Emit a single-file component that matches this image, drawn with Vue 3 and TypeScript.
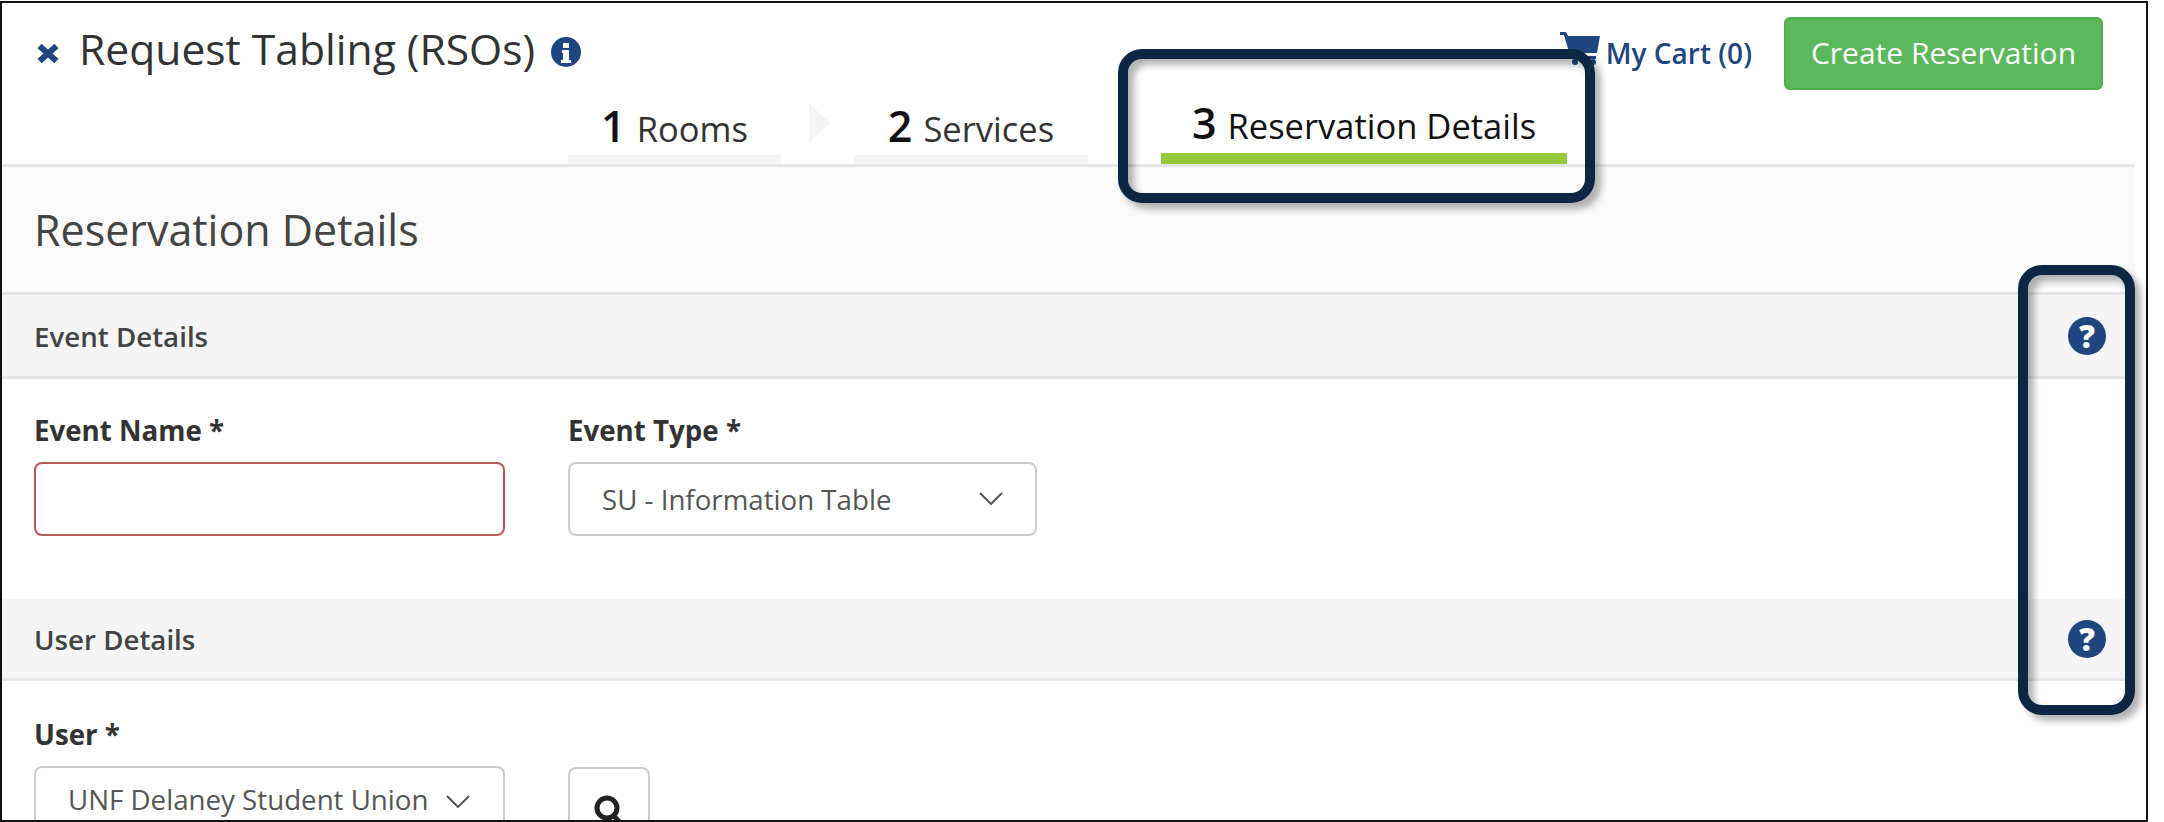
<script setup lang="ts">
const steps = [
  { n: '1', label: 'Rooms', active: false },
  { n: '2', label: 'Services', active: false },
  { n: '3', label: 'Reservation Details', active: true },
]
</script>

<template>
  <div class="page">
    <div class="frame">
      <header class="head">
        <div class="top">
          <svg class="close" viewBox="0 0 24 21"><path d="M3.5 3 L20.5 18 M20.5 3 L3.5 18" /></svg>
          <h1 class="title">Request Tabling (RSOs)</h1>
          <svg class="info" viewBox="0 0 30 30">
            <circle cx="15" cy="15" r="15" fill="#1f467f" />
            <path d="M12 6h6v5h-6zM11 13h7v10h2v3H10v-3h2v-7h-1z" fill="#fff" />
          </svg>
          <div class="spacer"></div>
          <a class="cart">
            <svg class="cart-ico" viewBox="0 0 40 34">
              <path d="M0 1h6l2 4h32l-3 17H13l1 3h22v3H11L4 4H0z" fill="#1f467f" />
              <circle cx="15" cy="31" r="3" fill="#1f467f" />
              <circle cx="33" cy="31" r="3" fill="#1f467f" />
            </svg>
            <span>My Cart (0)</span>
          </a>
          <button class="create">Create Reservation</button>
        </div>
        <nav class="steps">
          <template v-for="(s, i) in steps" :key="s.n">
            <div v-if="i > 0" class="sep"><i v-if="i === 1" class="arrow"></i></div>
            <div class="step" :class="['step-' + s.n, { active: s.active }]">
              <b class="num">{{ s.n }}</b>
              <span class="lbl">{{ s.label }}</span>
            </div>
          </template>
        </nav>
      </header>

      <div class="page-title"><h2>Reservation Details</h2></div>

      <div class="band">
        <span>Event Details</span>
        <span class="help">?</span>
      </div>
      <div class="form-row first">
        <div class="field">
          <label>Event Name *</label>
          <div class="control error"></div>
        </div>
        <div class="field type-field">
          <label>Event Type *</label>
          <div class="control select">
            <span>SU - Information Table</span>
            <svg class="chev" viewBox="0 0 24 13"><path d="M1 1 L12 12 L23 1" /></svg>
          </div>
        </div>
      </div>

      <div class="band">
        <span>User Details</span>
        <span class="help">?</span>
      </div>
      <div class="form-row last">
        <div class="field">
          <label>User *</label>
          <div class="control select user">
            <span>UNF Delaney Student Union</span>
            <svg class="chev" viewBox="0 0 24 13"><path d="M1 1 L12 12 L23 1" /></svg>
          </div>
        </div>
        <div class="field search-field">
          <button class="search">
            <svg viewBox="0 0 30 32"><circle cx="13" cy="13" r="10" /><path d="M20 21 L28 30" /></svg>
          </button>
        </div>
      </div>
    </div>

    <div class="callout callout-tab"></div>
    <div class="callout callout-help"></div>
  </div>
</template>

<style>
html, body { margin: 0; background: #fff; }
</style>

<style scoped>
.page {
  position: relative;
  width: 2164px;
  height: 822px;
  overflow: hidden;
  background: #fff;
  font-family: "Open Sans", "Liberation Sans", sans-serif;
  color: #333;
}
.frame {
  box-sizing: border-box;
  width: 2148px;
  height: 821px;
  margin-top: 1px;
  padding-right: 11px;
  border: 2px solid #111;
  overflow: hidden;
}
.head {
  box-sizing: border-box;
  height: 161px;
  display: flex;
  flex-direction: column;
}
.top {
  display: flex;
  align-items: flex-start;
  height: 87px;
  flex: none;
  padding: 14px 32px 0 34px;
  box-sizing: border-box;
}
.close { width: 24px; height: 21px; margin-top: 26px; flex: none; }
.close path { stroke: #1f467f; stroke-width: 6; fill: none; }
.title {
  margin: 6px 0 0 19px;
  font-size: 42.6px;
  font-weight: 400;
  line-height: 50px;
  color: #333;
}
.info { width: 30px; height: 30px; margin: 20px 0 0 16px; flex: none; }
.spacer { flex: 1; }
.cart {
  display: flex;
  align-items: flex-start;
  color: #1f467f;
  font-size: 28px;
  font-weight: 600;
  line-height: 36px;
  margin-right: 32px;
}
.cart span { margin-top: 18px; }
.cart-ico { width: 40px; height: 34px; margin: 14px 6px 0 0; }
.create {
  width: 319px;
  height: 73px;
  border: 2px solid #4cae4c;
  border-radius: 6px;
  background: #5cb85c;
  color: #fff;
  font: 400 30px "Open Sans", sans-serif;
  padding: 0 0 2px;
}
.steps {
  flex: 1;
  display: flex;
  align-items: stretch;
  padding-left: 566px;
}
.step {
  box-sizing: border-box;
  width: 213px;
  border-bottom: 9px solid #f5f5f5;
  display: flex;
  justify-content: center;
  align-items: baseline;
  gap: 11px;
  padding-top: 11px;
  color: #333;
}
.step-2 { width: 234px; }
.step.active {
  width: 406px;
  border-bottom: 11px solid #95c93d;
  padding-top: 8px;
  color: #111;
}
.num { font-size: 43px; font-weight: 600; line-height: 50px; color: #111; }
.lbl { font-size: 34.5px; }
.sep { width: 73px; position: relative; }
.arrow {
  position: absolute;
  left: 28px;
  top: 13px;
  width: 0;
  height: 0;
  border-left: 21px solid #f5f5f5;
  border-top: 20px solid transparent;
  border-bottom: 20px solid transparent;
}
.page-title {
  box-sizing: border-box;
  height: 128px;
  border-top: 3px solid #e6e6e6;
  background: #fafafa;
  display: flex;
  align-items: center;
  padding-left: 32px;
}
.page-title h2 { margin: 0; font-size: 43px; font-weight: 400; color: #444; }
.band {
  box-sizing: border-box;
  height: 87px;
  border-top: 3px solid #e6e6e6;
  border-bottom: 3px solid #e6e6e6;
  background: #f5f5f5;
  display: flex;
  align-items: center;
  justify-content: space-between;
  padding: 0 29px 0 32px;
  font-size: 27.7px;
  font-weight: 600;
  color: #444;
}
.form-row + .band { border-top: 0; height: 82px; }
.help {
  width: 38px;
  height: 38px;
  border-radius: 50%;
  background: #1f467f;
  color: #fff;
  font-size: 31px;
  font-weight: 800;
  line-height: 38px;
  text-align: center;
}
.form-row {
  display: flex;
  gap: 63px;
  padding: 0 0 0 32px;
  height: 220px;
}
.form-row.last { height: 140px; }
.field { width: 471px; padding-top: 33px; }
.last .field { padding-top: 35px; }
.field label {
  display: block;
  font-size: 27.7px;
  font-weight: 700;
  line-height: 36px;
  color: #333;
  margin-bottom: 14px;
}
.control {
  box-sizing: border-box;
  width: 471px;
  height: 74px;
  border: 2px solid #ccc;
  border-radius: 8px;
  background: #fff;
}
.type-field .control { width: 469px; }
.control.error { border-color: #b5595a; }
.select {
  display: flex;
  align-items: center;
  justify-content: space-between;
  padding: 0 32px;
  font-size: 27.7px;
  color: #555;
}
.user { padding: 0 33px 8px 32px; }
.chev { width: 24px; height: 13px; margin-top: -2px; flex: none; }
.user .chev { margin-top: 4px; }
.chev path { fill: none; stroke: #555; stroke-width: 2; }
.last .search-field { width: 82px; padding-top: 86px; }
.search {
  box-sizing: border-box;
  width: 82px;
  height: 74px;
  border: 2px solid #ccc;
  border-radius: 8px;
  background: #fff;
  padding: 26px 0 0 0;
  display: flex;
  justify-content: center;
  align-items: flex-start;
}
.search svg { width: 30px; height: 32px; }
.search circle, .search path { fill: none; stroke: #222; stroke-width: 5; }
.callout {
  position: absolute;
  box-sizing: border-box;
  border: 10px solid #0c2744;
  border-radius: 24px;
  box-shadow: 6px 6px 7px rgba(0,0,0,.3), inset 6px 6px 7px rgba(0,0,0,.3);
}
.callout-tab { left: 1118px; top: 49px; width: 477px; height: 154px; }
.callout-help { left: 2018px; top: 265px; width: 117px; height: 450px; }
</style>
